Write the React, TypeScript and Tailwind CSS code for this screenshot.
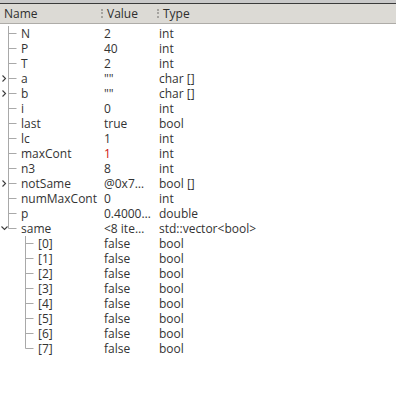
import React from 'react';

type Row = {
  name: string;
  value: string;
  type: string;
  depth: number;
  last?: boolean;
  arrow?: 'closed' | 'open';
  red?: boolean;
};

const rows: Row[] = [
  { name: 'N', value: '2', type: 'int', depth: 0 },
  { name: 'P', value: '40', type: 'int', depth: 0 },
  { name: 'T', value: '2', type: 'int', depth: 0 },
  { name: 'a', value: '""', type: 'char []', depth: 0, arrow: 'closed' },
  { name: 'b', value: '""', type: 'char []', depth: 0, arrow: 'closed' },
  { name: 'i', value: '0', type: 'int', depth: 0 },
  { name: 'last', value: 'true', type: 'bool', depth: 0 },
  { name: 'lc', value: '1', type: 'int', depth: 0 },
  { name: 'maxCont', value: '1', type: 'int', depth: 0, red: true },
  { name: 'n3', value: '8', type: 'int', depth: 0 },
  { name: 'notSame', value: '@0x7…', type: 'bool []', depth: 0, arrow: 'closed' },
  { name: 'numMaxCont', value: '0', type: 'int', depth: 0 },
  { name: 'p', value: '0.4000…', type: 'double', depth: 0 },
  { name: 'same', value: '<8 ite…', type: 'std::vector<bool>', depth: 0, last: true, arrow: 'open' },
  ...[0, 1, 2, 3, 4, 5, 6, 7].map((i) => ({
    name: `[${i}]`,
    value: 'false',
    type: 'bool',
    depth: 1,
    last: i === 7,
  })),
];

const LINE = '#a9a9a9';

function Connector({ row }: { row: Row }) {
  const x = row.depth === 0 ? 8.5 : 25.5;
  const w = row.depth === 0 ? 20 : 37;
  return (
    <svg width={w} height={15} className="shrink-0">
      <line x1={x} y1={0} x2={x} y2={row.last ? 7.5 : 15} stroke={LINE} strokeWidth={1} />
      <line x1={x} y1={7.5} x2={x + 8} y2={7.5} stroke={LINE} strokeWidth={1} />
      {row.arrow === 'closed' && (
        <path d="M2.5 4.5 L5.5 7.5 L2.5 10.5" fill="none" stroke="#3c3c3c" strokeWidth={1.1} />
      )}
      {row.arrow === 'open' && (
        <path d="M1.5 5.5 L4.5 8.5 L7.5 5.5" fill="none" stroke="#3c3c3c" strokeWidth={1.1} />
      )}
    </svg>
  );
}

function Sep() {
  return <div className="h-[9px] w-0 border-l-2 border-dotted border-[#a5a39f] mr-[4px]" />;
}

export default function App() {
  return (
    <div className="w-[396px] h-[398px] bg-white text-[12px] text-[#333333] overflow-hidden" style={{ fontFamily: '"Open Sans", sans-serif' }}>
      <div className="h-[3px] bg-[#c9c9c9]" />
      <div className="h-px bg-[#3a3a3a]" />
      <div className="h-[20px] bg-[#dcdad5] border-b border-[#aeaca8] grid grid-cols-[100px_56px_1fr] items-center leading-none">
        <div className="pl-[4px] text-[#2e2e2e]">Name</div>
        <div className="flex items-center pl-[1px] text-[#2e2e2e]">
          <Sep />
          Value
        </div>
        <div className="flex items-center pl-[1px] text-[#2e2e2e]">
          <Sep />
          Type
        </div>
      </div>
      <div className="pt-[2px]">
        {rows.map((r, idx) => (
          <div key={idx} className="grid grid-cols-[100px_56px_1fr] h-[15px] items-center leading-[14px] whitespace-nowrap">
            <div className="flex items-center">
              <Connector row={r} />
              <span className="pl-[1px]">{r.name}</span>
            </div>
            <div className={`pl-[4px] ${r.red ? 'text-[#d01010]' : ''}`}>{r.value}</div>
            <div className="pl-[3px]">{r.type}</div>
          </div>
        ))}
      </div>
    </div>
  );
}
